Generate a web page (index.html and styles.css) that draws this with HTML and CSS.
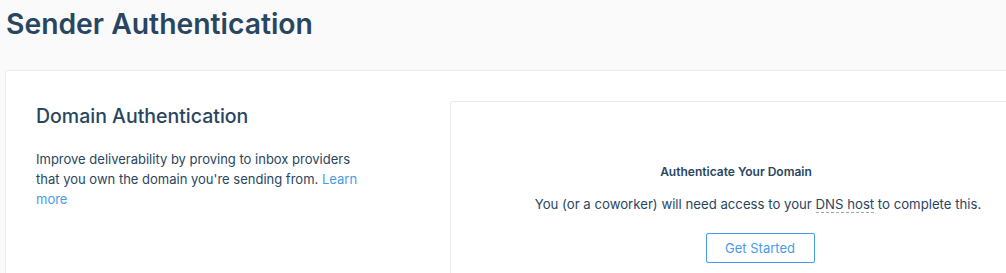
FILE: index.html
```html
<!DOCTYPE html>
<html lang="en">
<head>
    <meta charset="UTF-8">
    <meta name="viewport" content="width=device-width, initial-scale=1.0">
    <title>Sender Authentication</title>
    <link rel="stylesheet" href="styles.css">
</head>
<body>
    <div class="page">
        <h1 class="page-title">Sender Authentication</h1>

        <div class="card">
            <div class="intro">
                <h2>Domain Authentication</h2>
                <p>Improve deliverability by proving to inbox providers that you own the domain you're sending from. <a href="#">Learn more</a></p>
            </div>

            <div class="setup">
                <h3>Authenticate Your Domain</h3>
                <p>You (or a coworker) will need access to your <span class="hint">DNS host</span> to complete this.</p>
                <button class="btn">Get Started</button>
            </div>
        </div>
    </div>
</body>
</html>
```

FILE: styles.css
```css
* {
    margin: 0;
    padding: 0;
    box-sizing: border-box;
}

body {
    background: #fafafa;
    font-family: Inter, "Noto Sans", sans-serif;
    color: #294661;
    overflow: hidden;
}

.page {
    padding: 4px 0 0 5px;
}

.page-title {
    font-size: 28.3px;
    font-weight: 600;
    line-height: 40px;
    padding-left: 1px;
}

.card {
    margin-top: 26px;
    width: 1100px;
    height: 230px;
    display: flex;
    align-items: flex-start;
    background: #fff;
    border: 1px solid #e9ecef;
    border-radius: 3px;
    padding: 30px 0 0 30px;
}

.intro {
    width: 414px;
    padding-top: 2px;
}

.intro h2 {
    font-size: 19.5px;
    font-weight: 500;
    line-height: 26px;
    margin-bottom: 20px;
}

.intro p {
    font-size: 13px;
    line-height: 20px;
    width: 340px;
}

.intro a {
    color: #489be8;
    text-decoration: none;
}

.setup {
    width: 616px;
    height: 200px;
    border: 1px solid #e9ecef;
    border-radius: 2px;
    padding-top: 61px;
    display: flex;
    flex-direction: column;
    align-items: center;
}

.setup h3 {
    font-size: 12px;
    font-weight: 600;
    line-height: 18px;
    padding-right: 44px;
    margin-bottom: 13px;
}

.setup p {
    font-size: 13.2px;
    line-height: 20px;
    margin-bottom: 19px;
}

.hint {
    border-bottom: 1px dashed #9fa8b3;
}

.btn {
    width: 109px;
    height: 30px;
    background: #fff;
    border: 1px solid #489be8;
    border-radius: 2px;
    color: #489be8;
    font-family: inherit;
    font-size: 13px;
    margin-left: 4px;
}
```
